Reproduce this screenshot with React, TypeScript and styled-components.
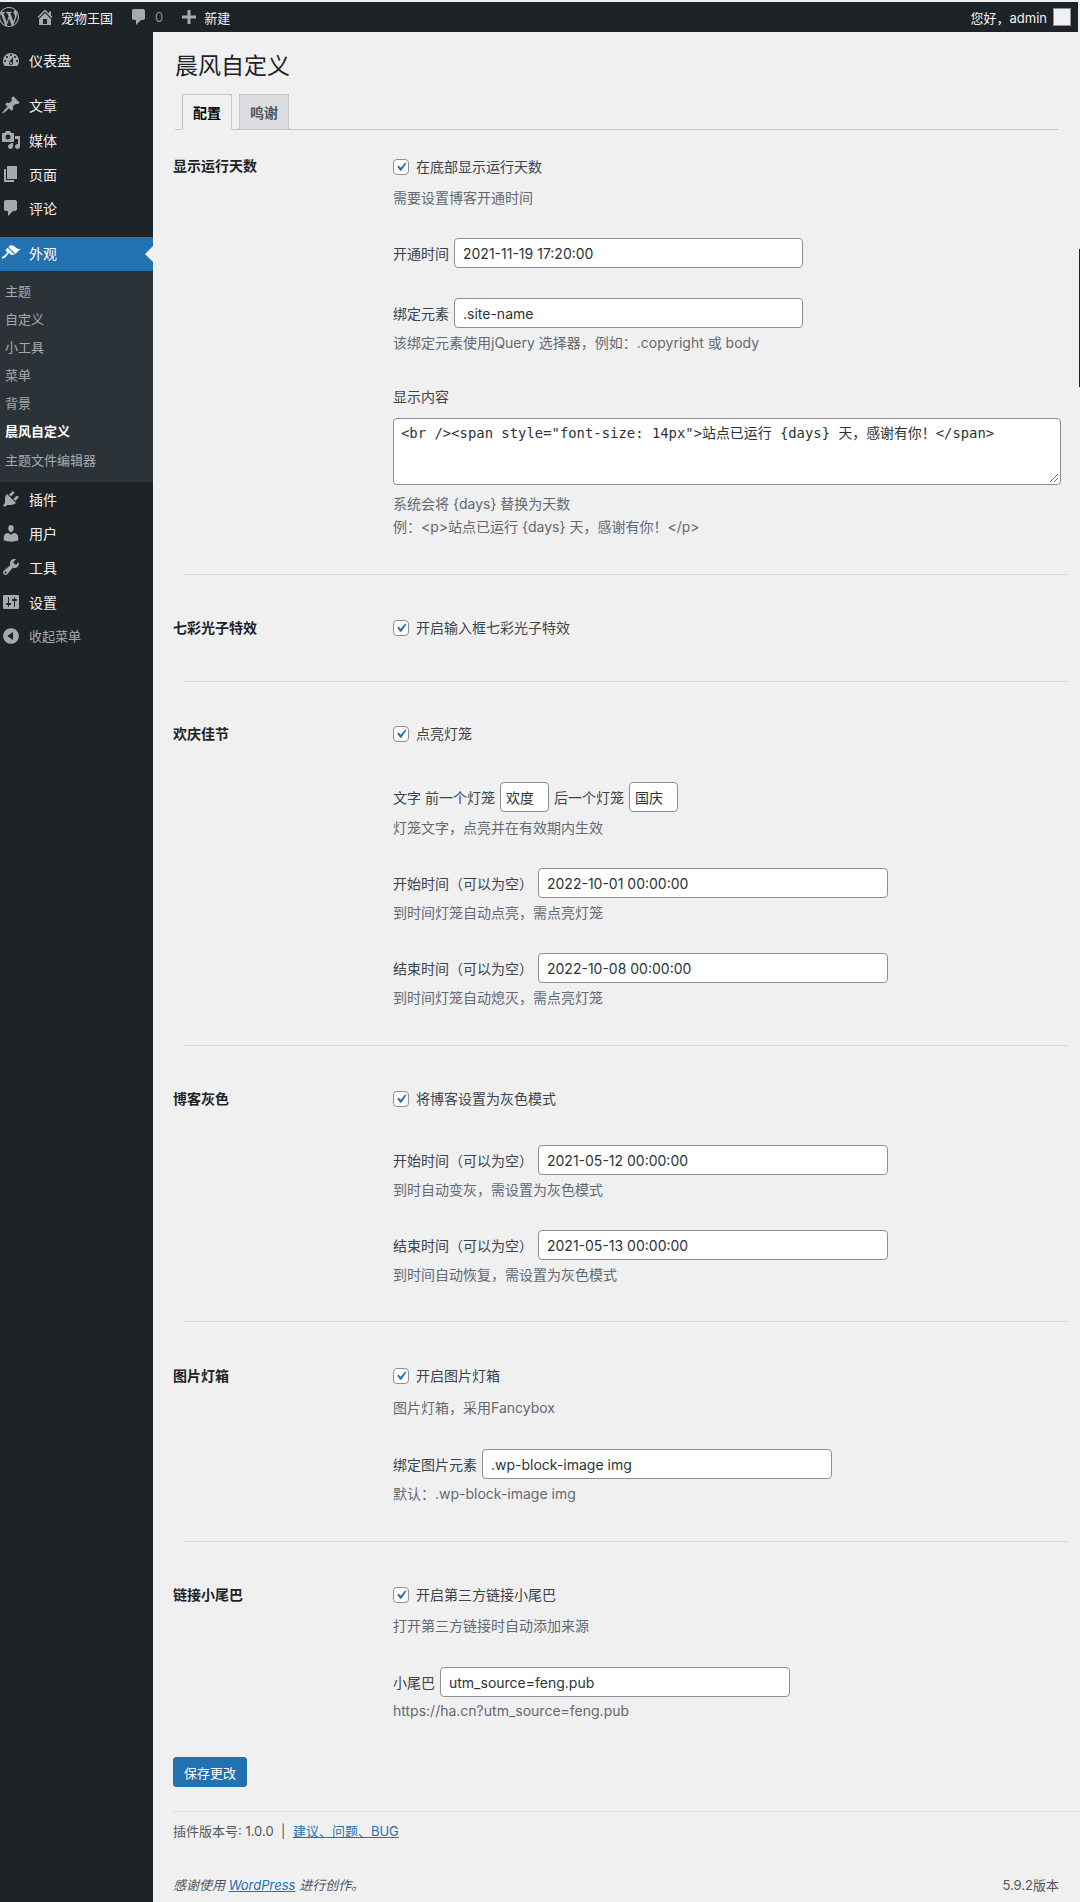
import React from 'react';
import styled, { createGlobalStyle } from 'styled-components';

const FONT = 'Inter, "Noto Sans CJK SC", sans-serif';

const Global = createGlobalStyle`
  html, body { margin: 0; padding: 0; background: #f0f0f1; }
  body { font-family: ${FONT}; font-size: 14px; color: #3c434a; overflow: hidden; }
  #root { height: 1902px; }
  * { box-sizing: border-box; }
`;

const Page = styled.div`
  position: relative;
  width: 1080px;
  height: 1902px;
  overflow: hidden;
  background: #f0f0f1;
  padding-top: 2px;
  display: flex;
  flex-direction: column;
`;

const EdgeMark = styled.div`
  position: absolute;
  right: 0;
  top: 249px;
  width: 1px;
  height: 138px;
  background: #1d2327;
`;

const AdminBar = styled.header`
  height: 30px;
  flex: none;
  background: #1d2327;
  color: #f0f0f1;
  display: flex;
  align-items: center;
  font-size: 13px;
  margin-right: 2px;
`;

const BarItem = styled.div<{ $ml: number; $gap?: number; $muted?: boolean }>`
  display: flex;
  align-items: center;
  margin-left: ${p => p.$ml}px;
  gap: ${p => p.$gap ?? 5}px;
  color: ${p => (p.$muted ? '#8c8f94' : '#f0f0f1')};
`;

const BarSpacer = styled.div`flex: 1;`;

const Avatar = styled.div`
  width: 18px;
  height: 18px;
  margin: 0 7px 0 6px;
  background: #f0f0f1;
  border: 1px solid #8c8f94;
`;

const Body = styled.div`
  flex: 1;
  display: flex;
  min-height: 0;
`;

const Sidebar = styled.nav`
  width: 153px;
  flex: none;
  background: #1d2327;
  padding-top: 12px;
`;

const MenuItem = styled.div<{ $active?: boolean; $dim?: boolean; $mt?: number }>`
  position: relative;
  height: ${p => (p.$active ? 34 : 34.3)}px;
  margin-top: ${p => p.$mt ?? 0}px;
  display: flex;
  align-items: center;
  padding: 0 0 2px 1px;
  gap: 8px;
  font-size: ${p => (p.$dim ? 13 : 14)}px;
  color: ${p => (p.$active ? '#fff' : p.$dim ? '#a7aaad' : '#f0f0f1')};
  background: ${p => (p.$active ? '#2271b1' : 'transparent')};
  svg { fill: ${p => (p.$active ? '#fff' : '#a7aaad')}; flex: none; }
`;

const ActiveArrow = styled.span`
  position: absolute;
  right: 0;
  top: 9px;
  width: 0;
  height: 0;
  border: 8px solid transparent;
  border-right-color: #f0f0f1;
  border-left-width: 0;
`;

const SubMenu = styled.div`
  background: #2c3338;
  padding: 6px 0;
  height: 211.5px;
`;

const SubItem = styled.div<{ $current?: boolean }>`
  height: 28.1px;
  line-height: 28px;
  padding-left: 5px;
  font-size: 13px;
  color: ${p => (p.$current ? '#fff' : '#a7aaad')};
  font-weight: ${p => (p.$current ? 700 : 400)};
`;

const Main = styled.main`
  flex: 1;
  min-width: 0;
  padding-left: 20px;
  display: flex;
  flex-direction: column;
`;

const Title = styled.h1`
  margin: 20px 0 0 2px;
  font-size: 23px;
  line-height: 29px;
  font-weight: 400;
  color: #1d2327;
`;

const Tabs = styled.div`
  margin: 13px 22px 0 2px;
  height: 36px;
  border-bottom: 1px solid #c3c4c7;
  display: flex;
  padding-left: 7px;
  gap: 7px;
`;

const Tab = styled.div<{ $active?: boolean }>`
  width: 50px;
  height: 36px;
  display: flex;
  align-items: center;
  justify-content: center;
  font-size: 14px;
  font-weight: 700;
  border: 1px solid #c3c4c7;
  border-bottom: ${p => (p.$active ? '1px solid #f0f0f1' : '1px solid #c3c4c7')};
  background: ${p => (p.$active ? '#f0f0f1' : '#dcdcde')};
  color: ${p => (p.$active ? '#000' : '#50575e')};
`;

const Section = styled.section<{ $pt: number; $h: number; $rule?: boolean }>`
  display: grid;
  grid-template-columns: 220px 1fr;
  height: ${p => p.$h}px;
  padding-top: ${p => p.$pt}px;
  margin-right: 12px;
  position: relative;
  ${p => (p.$rule === false ? '' : 'border-bottom: 1px solid #dcdcde; margin-left: 10px;')}
`;

const SectionTitle = styled.div<{ $inset?: boolean; $lift?: number }>`
  font-size: 14px;
  font-weight: 700;
  line-height: 20px;
  color: #1d2327;
  margin-top: ${p => -(p.$lift ?? 0)}px;
  margin-left: ${p => (p.$inset === false ? 0 : -10)}px;
`;

const Cell = styled.div<{ $shift?: boolean }>`
  display: flex;
  flex-direction: column;
  margin-left: ${p => (p.$shift === false ? 0 : -10)}px;
  margin-right: 7px;
`;

const CheckLine = styled.label`
  display: flex;
  align-items: center;
  height: 20px;
  gap: 7px;
  line-height: 20px;
`;

const CheckBox = styled.span`
  width: 16px;
  height: 16px;
  flex: none;
  border: 1px solid #8c8f94;
  border-radius: 4px;
  background: #fff;
  display: flex;
  align-items: center;
  justify-content: center;
  svg { fill: #2271b1; }
`;

const Help = styled.p<{ $mt: number }>`
  margin: ${p => p.$mt}px 0 0;
  line-height: 20px;
  font-size: 14px;
  color: #646970;
`;

const Line = styled.div<{ $mt: number }>`
  display: flex;
  align-items: center;
  margin-top: ${p => p.$mt}px;
  height: 30px;
  gap: 5px;
  white-space: pre;
`;

const LabelLine = styled.div<{ $mt: number }>`
  margin-top: ${p => p.$mt}px;
  line-height: 20px;
`;

const Field = styled.div<{ $w: number; $pad?: number }>`
  width: ${p => p.$w}px;
  height: 30px;
  padding: 0 ${p => p.$pad ?? 8}px;
  border: 1px solid #8c8f94;
  border-radius: 4px;
  background: #fff;
  color: #2c3338;
  display: flex;
  align-items: center;
  font-size: 14px;
`;

const Area = styled.div`
  position: relative;
  margin-top: 11px;
  height: 67px;
  padding: 4px 7px;
  border: 1px solid #8c8f94;
  border-radius: 4px;
  background: #fff;
  color: #2c3338;
  font-family: "DejaVu Sans Mono", "Noto Sans CJK SC", monospace;
  font-size: 13.9px;
  line-height: 20px;
  white-space: pre;
`;

const Grip = styled.svg`
  position: absolute;
  right: 1px;
  bottom: 1px;
`;

const SaveButton = styled.button`
  margin: 24px 0 0 0;
  align-self: flex-start;
  width: 74px;
  height: 30px;
  padding: 0;
  border: 1px solid #2271b1;
  border-radius: 3px;
  background: #2271b1;
  color: #fff;
  font-family: ${FONT};
  font-size: 13px;
`;

const Foot = styled.div`
  margin-top: 24px;
  border-top: 1px solid #dcdcde;
  padding-top: 9px;
  line-height: 20px;
  font-size: 13px;
  color: #50575e;
  display: flex;
  gap: 4px;
`;

const Link = styled.a`
  color: #2271b1;
  text-decoration: underline;
`;

const Thanks = styled.div`
  margin: 34px 21px 0 0;
  display: flex;
  justify-content: space-between;
  font-size: 13px;
  line-height: 20px;
  color: #50575e;
`;

const ThanksText = styled.em`font-style: italic;`;

const PATHS: Record<string, string> = {
  wp: 'M20 10c0-5.51-4.49-10-10-10C4.48 0 0 4.49 0 10c0 5.52 4.48 10 10 10 5.51 0 10-4.48 10-10zM7.78 15.37L4.37 6.22c.55-.02 1.17-.08 1.17-.08.5-.06.44-1.13-.06-1.11 0 0-1.45.11-2.37.11-.18 0-.37 0-.58-.01C4.12 2.69 6.87 1.11 10 1.11c2.33 0 4.45.87 6.05 2.34-.68-.11-1.65.39-1.65 1.58 0 .74.45 1.36.9 2.1.35.61.55 1.36.55 2.46 0 1.49-1.4 5-1.4 5l-3.03-8.37c.54-.02.82-.17.82-.17.5-.05.44-1.25-.06-1.22 0 0-1.44.12-2.38.12-.87 0-2.33-.12-2.33-.12-.5-.03-.56 1.2-.06 1.22l.92.08 1.26 3.41zM17.41 10c.24-.64.74-1.87.43-4.25.7 1.29 1.05 2.71 1.05 4.25 0 3.29-1.73 6.24-4.4 7.78.97-2.59 1.94-5.2 2.92-7.78zM6.1 18.09C3.12 16.65 1.11 13.53 1.11 10c0-1.3.23-2.48.72-3.59C3.25 10.3 4.67 14.2 6.1 18.09zm4.03-6.63l2.58 6.98c-.86.29-1.76.45-2.71.45-.79 0-1.57-.11-2.29-.33.81-2.38 1.62-4.74 2.42-7.1z',
  home: 'M16 8.5l1.53 1.53-1.06 1.06L10 4.62l-6.47 6.47-1.06-1.06L10 2.5l4 4v-2h2v4zm-6-2.46l6 5.99V18H4v-5.97zM12 17v-5H8v5h4z',
  comment: 'M5 2h9c1.1 0 2 .9 2 2v7c0 1.1-.9 2-2 2h-2l-5 5v-5H5c-1.1 0-2-.9-2-2V4c0-1.1.9-2 2-2z',
  plus: 'M17 8.5v3h-5.5V17h-3v-5.5H3v-3h5.5V3h3v5.5z',
  dashboard: 'M3.76 16h12.48c1.1-1.37 1.76-3.11 1.76-5 0-4.42-3.58-8-8-8s-8 3.58-8 8c0 1.89.66 3.63 1.76 5zM10 4c.55 0 1 .45 1 1s-.45 1-1 1-1-.45-1-1 .45-1 1-1zM6 6c.55 0 1 .45 1 1s-.45 1-1 1-1-.45-1-1 .45-1 1-1zm8 0c.55 0 1 .45 1 1s-.45 1-1 1-1-.45-1-1 .45-1 1-1zm-5.37 5.55L12 7v6c0 1.1-.9 2-2 2s-2-.9-2-2c0-.57.24-1.08.63-1.45zM4 10c.55 0 1 .45 1 1s-.45 1-1 1-1-.45-1-1 .45-1 1-1zm12 0c.55 0 1 .45 1 1s-.45 1-1 1-1-.45-1-1 .45-1 1-1zm-5 3c0-.55-.45-1-1-1s-1 .45-1 1 .45 1 1 1 1-.45 1-1z',
  pin: 'M10.44 3.02l1.82-1.82 6.36 6.35-1.83 1.82c-1.05-.68-2.48-.57-3.41.36l-.75.75c-.92.93-1.04 2.35-.35 3.41l-1.83 1.82-2.41-2.41-2.8 2.79c-.42.42-3.38 2.71-3.8 2.29s1.86-3.39 2.28-3.81l2.79-2.79L4.1 9.36l1.83-1.82c1.05.69 2.48.57 3.4-.36l.75-.75c.93-.92 1.05-2.35.36-3.41z',
  media: 'M13 11V4c0-.55-.45-1-1-1h-1.67L9 1H5L3.67 3H2c-.55 0-1 .45-1 1v7c0 .55.45 1 1 1h10c.55 0 1-.45 1-1zM7 4.5c1.38 0 2.5 1.12 2.5 2.5S8.38 9.5 7 9.5 4.5 8.38 4.5 7 5.62 4.5 7 4.5zM14 6h5v10.5c0 1.38-1.12 2.5-2.5 2.5S14 17.88 14 16.5s1.12-2.5 2.5-2.5c.17 0 .34.02.5.05V9h-3V6zm-4 8.05V13h2v3.5c0 1.38-1.12 2.5-2.5 2.5S7 17.88 7 16.5 8.12 14 9.5 14c.17 0 .34.02.5.05z',
  page: 'M6 15V2h10v13H6zm-1 1h8v2H3V5h2v11z',
  appearance: 'M14.48 11.06L7.41 3.99l1.5-1.5c.5-.56 2.3-.47 3.51.32 1.21.8 1.43 1.28 2.91 2.1 1.18.64 2.45 1.26 4.45.85zm-.71.71L6.7 4.7 4.93 6.47c-.39.39-.39 1.02 0 1.41l1.06 1.06c.39.39.39 1.03 0 1.42-.6.6-1.43 1.11-2.21 1.69-.35.26-.7.53-1.01.84C1.43 13.23.5 14.9 1.06 15.47c.59.59 2.55-.35 3.89-1.68.31-.31.58-.66.84-1.01.58-.78 1.09-1.61 1.69-2.21.39-.39 1.03-.39 1.42 0l1.06 1.06c.39.39 1.02.39 1.41 0z',
  plugin: 'M13.11 4.36L9.87 7.6 8 5.73l3.24-3.24c.35-.34 1.05-.2 1.56.32.52.51.66 1.21.31 1.55zm-8 1.77l.91-1.12 9.01 9.01-1.19.84c-.71.71-2.63 1.16-3.82 1.16H6.14L4.9 17.26c-.59.59-1.54.59-2.12 0-.59-.58-.59-1.53 0-2.12l1.24-1.24v-3.88c0-1.13.4-3.19 1.09-3.89zm7.26 3.97l3.24-3.24c.34-.35 1.04-.21 1.55.31.52.51.66 1.21.31 1.55l-3.24 3.25z',
  users: 'M10 9.25c-2.27 0-2.73-3.44-2.73-3.44C7 4.02 7.82 2 9.97 2c2.16 0 2.98 2.02 2.71 3.81 0 0-.41 3.44-2.68 3.44zm0 2.57L12.72 10c2.39 0 4.52 1.83 4.52 4.03v3.49s-3.65 1.13-7.24 1.13c-3.65 0-7.24-1.13-7.24-1.13v-3.49c0-2.25 1.94-4.03 4.47-4.03z',
  tools: 'M16.68 9.77c-1.34 1.34-3.3 1.67-4.95.99l-5.41 6.52c-.99.99-2.59.99-3.58 0s-.99-2.59 0-3.57l6.52-5.42c-.68-1.65-.35-3.61.99-4.95 1.28-1.28 3.12-1.62 4.72-1.06l-2.89 2.89 2.82 2.82 2.86-2.87c.53 1.58.18 3.39-1.08 4.65zM3.81 16.21c.4.39 1.04.39 1.43 0 .4-.4.4-1.04 0-1.43-.39-.4-1.03-.4-1.43 0-.39.39-.39 1.03 0 1.43z',
  settings: 'M18 16V4c0-.55-.45-1-1-1H3c-.55 0-1 .45-1 1v12c0 .55.45 1 1 1h14c.55 0 1-.45 1-1zM8 11h1c.55 0 1 .45 1 1s-.45 1-1 1H8v1.5c0 .28-.22.5-.5.5s-.5-.22-.5-.5V13H6c-.55 0-1-.45-1-1s.45-1 1-1h1V5.5c0-.28.22-.5.5-.5s.5.22.5.5V11zm5-2h-1c-.55 0-1-.45-1-1s.45-1 1-1h1V5.5c0-.28.22-.5.5-.5s.5.22.5.5V7h1c.55 0 1 .45 1 1s-.45 1-1 1h-1v5.5c0 .28-.22.5-.5.5s-.5-.22-.5-.5V9z',
  collapse: 'M10 2.16c4.33 0 7.84 3.51 7.84 7.84s-3.51 7.84-7.84 7.84S2.16 14.33 2.16 10 5.71 2.16 10 2.16zm2 11.72V6.12L6.18 9.97z',
};

const Icon = ({ name, size = 20, color }: { name: string; size?: number; color?: string }) => (
  <svg width={size} height={size} viewBox="0 0 20 20" fill={color} aria-hidden="true">
    <path d={PATHS[name]} />
  </svg>
);

const Check = () => (
  <CheckBox>
    <svg width="14" height="14" viewBox="0 0 20 20">
      <path d="M14.83 4.89l1.34.94-5.81 8.38H9.02L5.78 9.67l1.34-1.25 2.57 2.4z" transform="translate(-2.5 -2.5) scale(1.25)" />
    </svg>
  </CheckBox>
);

const CheckRow = ({ text }: { text: string }) => (
  <CheckLine>
    <Check />
    {text}
  </CheckLine>
);

const menuTop = [
  { icon: 'dashboard', label: '仪表盘', mt: 0 },
  { icon: 'pin', label: '文章', mt: 11 },
  { icon: 'media', label: '媒体', mt: 0 },
  { icon: 'page', label: '页面', mt: 0 },
  { icon: 'comment', label: '评论', mt: 0 },
];
const subs = ['主题', '自定义', '小工具', '菜单', '背景', '晨风自定义', '主题文件编辑器'];
const menuBottom = [
  { icon: 'plugin', label: '插件' },
  { icon: 'users', label: '用户' },
  { icon: 'tools', label: '工具' },
  { icon: 'settings', label: '设置' },
];

export default function App() {
  return (
    <Page>
      <Global />
      <EdgeMark />
      <AdminBar>
        <BarItem $ml={-1}><Icon name="wp" size={20} color="#a7aaad" /></BarItem>
        <BarItem $ml={16} $gap={6}><Icon name="home" size={20} color="#a7aaad" />宠物王国</BarItem>
        <BarItem $ml={16} $gap={6} $muted><Icon name="comment" size={20} color="#a7aaad" />0</BarItem>
        <BarItem $ml={16} $gap={5}><Icon name="plus" size={20} color="#a7aaad" />新建</BarItem>
        <BarSpacer />
        <BarItem $ml={0}>您好，admin</BarItem>
        <Avatar />
      </AdminBar>
      <Body>
        <Sidebar>
          {menuTop.map(m => (
            <MenuItem key={m.label} $mt={m.mt}>
              <Icon name={m.icon} />
              {m.label}
            </MenuItem>
          ))}
          <MenuItem $active $mt={10.5}>
            <Icon name="appearance" />
            外观
            <ActiveArrow />
          </MenuItem>
          <SubMenu>
            {subs.map(s => (
              <SubItem key={s} $current={s === '晨风自定义'}>{s}</SubItem>
            ))}
          </SubMenu>
          {menuBottom.map(m => (
            <MenuItem key={m.label}>
              <Icon name={m.icon} />
              {m.label}
            </MenuItem>
          ))}
          <MenuItem $dim>
            <Icon name="collapse" />
            收起菜单
          </MenuItem>
        </Sidebar>
        <Main>
          <Title>晨风自定义</Title>
          <Tabs>
            <Tab $active>配置</Tab>
            <Tab>鸣谢</Tab>
          </Tabs>

          <Section $pt={27} $h={445}>
            <SectionTitle $lift={1}>显示运行天数</SectionTitle>
            <Cell>
              <CheckRow text="在底部显示运行天数" />
              <Help $mt={11}>需要设置博客开通时间</Help>
              <Line $mt={30}>开通时间<Field $w={349}>2021-11-19 17:20:00</Field></Line>
              <Line $mt={30}>绑定元素<Field $w={349}>.site-name</Field></Line>
              <Help $mt={5}>该绑定元素使用jQuery 选择器，例如：.copyright 或 body</Help>
              <LabelLine $mt={34}>显示内容</LabelLine>
              <Area>
                {'<br /><span style="font-size: 14px">站点已运行 {days} 天，感谢有你！</span>'}
                <Grip width="11" height="11" viewBox="0 0 11 11">
                  <path d="M10 2L2 10M10 6L6 10" stroke="#777" strokeWidth="1" fill="none" />
                </Grip>
              </Area>
              <Help $mt={9}>系统会将 {'{days}'} 替换为天数</Help>
              <Help $mt={3}>例：&lt;p&gt;站点已运行 {'{days}'} 天，感谢有你！&lt;/p&gt;</Help>
            </Cell>
          </Section>

          <Section $pt={43} $h={107}>
            <SectionTitle>七彩光子特效</SectionTitle>
            <Cell><CheckRow text="开启输入框七彩光子特效" /></Cell>
          </Section>

          <Section $pt={42} $h={364}>
            <SectionTitle>欢庆佳节</SectionTitle>
            <Cell>
              <CheckRow text="点亮灯笼" />
              <Line $mt={38}>文字 前一个灯笼<Field $w={49} $pad={5}>欢度</Field>后一个灯笼<Field $w={49} $pad={5}>国庆</Field></Line>
              <Help $mt={6}>灯笼文字，点亮并在有效期内生效</Help>
              <Line $mt={30}>开始时间（可以为空）<Field $w={350}>2022-10-01 00:00:00</Field></Line>
              <Help $mt={5}>到时间灯笼自动点亮，需点亮灯笼</Help>
              <Line $mt={30}>结束时间（可以为空）<Field $w={350}>2022-10-08 00:00:00</Field></Line>
              <Help $mt={5}>到时间灯笼自动熄灭，需点亮灯笼</Help>
            </Cell>
          </Section>

          <Section $pt={43} $h={276}>
            <SectionTitle>博客灰色</SectionTitle>
            <Cell>
              <CheckRow text="将博客设置为灰色模式" />
              <Line $mt={36}>开始时间（可以为空）<Field $w={350}>2021-05-12 00:00:00</Field></Line>
              <Help $mt={5}>到时自动变灰，需设置为灰色模式</Help>
              <Line $mt={30}>结束时间（可以为空）<Field $w={350}>2021-05-13 00:00:00</Field></Line>
              <Help $mt={5}>到时间自动恢复，需设置为灰色模式</Help>
            </Cell>
          </Section>

          <Section $pt={44} $h={220}>
            <SectionTitle>图片灯箱</SectionTitle>
            <Cell>
              <CheckRow text="开启图片灯箱" />
              <Help $mt={12}>图片灯箱，采用Fancybox</Help>
              <Line $mt={31}>绑定图片元素<Field $w={350}>.wp-block-image img</Field></Line>
              <Help $mt={5}>默认：.wp-block-image img</Help>
            </Cell>
          </Section>

          <Section $pt={43} $h={191} $rule={false}>
            <SectionTitle $inset={false}>链接小尾巴</SectionTitle>
            <Cell $shift={false}>
              <CheckRow text="开启第三方链接小尾巴" />
              <Help $mt={11}>打开第三方链接时自动添加来源</Help>
              <Line $mt={31}>小尾巴<Field $w={350}>utm_source=feng.pub</Field></Line>
              <Help $mt={4}>https://ha.cn?utm_source=feng.pub</Help>
            </Cell>
          </Section>

          <SaveButton>保存更改</SaveButton>
          <Foot>
            插件版本号: 1.0.0 &nbsp;|&nbsp; <Link>建议、问题、BUG</Link>
          </Foot>
          <Thanks>
            <ThanksText>感谢使用 <Link>WordPress</Link> 进行创作。</ThanksText>
            <span>5.9.2版本</span>
          </Thanks>
        </Main>
      </Body>
    </Page>
  );
}
